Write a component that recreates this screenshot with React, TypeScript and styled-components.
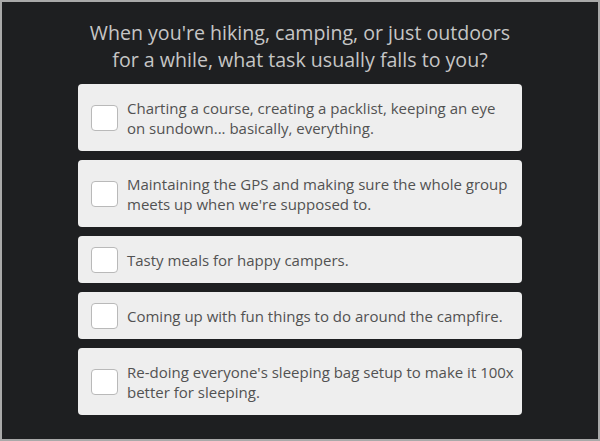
import React from "react";
import styled, { createGlobalStyle } from "styled-components";

const Global = createGlobalStyle`
  html, body { margin: 0; padding: 0; background: #1e1f21; }
  * { box-sizing: border-box; }
`;

const Frame = styled.div`
  width: 600px;
  height: 441px;
  border: 2px solid #a9a9a9;
  background: #1e1f21;
  display: flex;
  flex-direction: column;
  align-items: center;
  padding-top: 17px;
  font-family: "Open Sans", Lato, sans-serif;
`;

const Title = styled.h1`
  margin: 0 0 11px;
  font-size: 19.6px;
  line-height: 27px;
  font-weight: 400;
  color: #c6c6c6;
  text-align: center;
`;

const List = styled.div`
  width: 444px;
  display: flex;
  flex-direction: column;
  gap: 9px;
`;

const Card = styled.label`
  display: flex;
  align-items: center;
  gap: 9px;
  padding: 10.5px 13px;
  background: #eeeeee;
  border-radius: 4px;
  line-height: 20px;
  cursor: pointer;
`;

const Box = styled.span`
  flex: none;
  width: 27px;
  height: 26px;
  background: #ffffff;
  border: 1px solid #b9b9b9;
  border-radius: 4px;
`;

const Text = styled.span`
  padding: 3px 0;
  font-size: 15px;
  line-height: 20px;
  color: #525252;
  white-space: nowrap;
`;

const options: React.ReactNode[] = [
  <>Charting a course, creating a packlist, keeping an eye<br />on sundown... basically, everything.</>,
  <>Maintaining the GPS and making sure the whole group<br />meets up when we're supposed to.</>,
  <>Tasty meals for happy campers.</>,
  <>Coming up with fun things to do around the campfire.</>,
  <>Re-doing everyone's sleeping bag setup to make it 100x<br />better for sleeping.</>,
];

export default function App() {
  return (
    <>
      <Global />
      <Frame>
        <Title>
          When you're hiking, camping, or just outdoors
          <br />
          for a while, what task usually falls to you?
        </Title>
        <List>
          {options.map((o, i) => (
            <Card key={i}>
              <Box />
              <Text>{o}</Text>
            </Card>
          ))}
        </List>
      </Frame>
    </>
  );
}
